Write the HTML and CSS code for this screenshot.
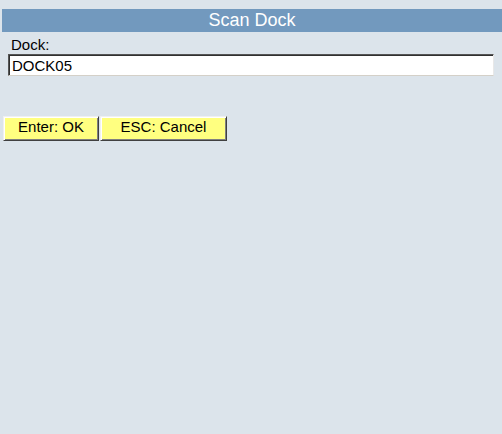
FILE: index.html
```html
<!DOCTYPE html>
<html>
<head>
<meta charset="utf-8">
<title>Scan Dock</title>
<link rel="stylesheet" href="styles.css">
</head>
<body>
<div class="page">
  <div class="header">Scan Dock</div>
  <div class="field">
    <label class="label" for="dock">Dock:</label>
    <input class="input" id="dock" type="text" value="DOCK05">
  </div>
  <div class="actions">
    <button class="btn btn-ok" type="button">Enter: OK</button>
    <button class="btn btn-cancel" type="button">ESC: Cancel</button>
  </div>
</div>
</body>
</html>
```
FILE: styles.css
```css
html, body {
  margin: 0;
  padding: 0;
  background: #dce4eb;
  height: 100%;
}
body {
  font-family: "Liberation Sans", Arial, sans-serif;
  font-size: 15px;
  color: #000;
}
.page {
  padding: 9px 0 0 2px;
}
.header {
  height: 23px;
  line-height: 23px;
  background: #7299be;
  color: #fff;
  font-size: 18px;
  text-align: center;
}
.field {
  display: flex;
  flex-direction: column;
  padding: 4px 8px 0 6px;
}
.label {
  display: block;
  line-height: 18px;
  padding-left: 3px;
}
.input {
  box-sizing: border-box;
  width: 486px;
  height: 22px;
  margin: 0;
  padding: 0 3px;
  font-family: "Liberation Sans", Arial, sans-serif;
  font-size: 15px;
  color: #000;
  background: #fff;
  border: 1px solid;
  border-color: #555 #e8e8e8 #d4d0c8 #555;
  box-shadow: inset 1px 1px 0 #303030, inset -1px -1px 0 #fff;
  outline: none;
}
.actions {
  display: flex;
  gap: 1px;
  padding: 40px 0 0 1px;
}
.btn {
  box-sizing: border-box;
  height: 25px;
  margin: 0;
  padding: 0 0 3px 0;
  font-family: "Liberation Sans", Arial, sans-serif;
  font-size: 15px;
  line-height: 18px;
  color: #000;
  background: #ffff80;
  border: 1px solid;
  border-color: #f0f0f0 #404040 #404040 #f0f0f0;
  box-shadow: inset 1px 1px 0 #fff, inset -1px -1px 0 #808080;
  text-align: center;
}
.btn-ok {
  width: 96px;
}
.btn-cancel {
  width: 127px;
}
```
